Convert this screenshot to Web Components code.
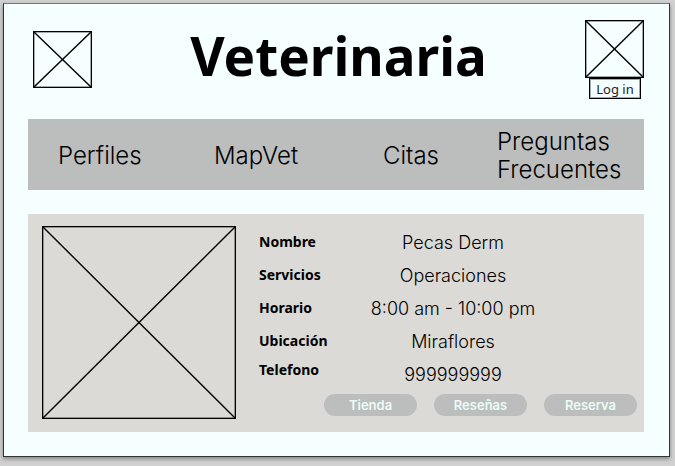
<!DOCTYPE html>
<html lang="es">
<head>
<meta charset="utf-8">
<title>Veterinaria</title>
<style>
  body { margin: 0; background: #d2d1d1; color: #000; font-family: Inter, "Noto Sans", sans-serif; }
</style>
</head>
<body>
<vet-page></vet-page>
<script>
const define = (name, html, setup) => customElements.define(name, class extends HTMLElement {
  connectedCallback() {
    if (this.shadowRoot) return;
    this.attachShadow({ mode: 'open' }).innerHTML = '<style>*{box-sizing:border-box}</style>' + html;
    if (setup) setup(this, this.shadowRoot);
  }
});

define('image-box', `
  <style>
    :host { display: block; }
    svg { display: block; width: 100%; height: 100%; border: 1px solid #000; box-shadow: inset 0 0 0 1px #0005; }
    line { stroke: #000; stroke-width: 1.4; }
  </style>
  <svg role="img" aria-label="Imagen"><line x1="0" y1="0" x2="100%" y2="100%"/><line x1="100%" y1="0" x2="0" y2="100%"/></svg>`);

define('vet-header', `
  <style>
    :host { display: block; }
    header { display: grid; grid-template-columns: 60px 1fr 60px; align-items: center; padding: 16px 0 20px 5px; }
    .logo { width: 59px; height: 57px; }
    h1 { margin: 0; padding-bottom: 8px; text-align: center; font: 700 53px/68px "Noto Sans", sans-serif; }
    .user { display: flex; flex-direction: column; align-items: flex-end; }
    .avatar { width: 59px; height: 58px; }
    button { width: 52px; height: 21px; margin-right: 3px; padding: 0; border: 1px solid #000; outline: 1px solid #0005; outline-offset: -2px;
      background: transparent; color: #222; font: 13px/18px "Noto Sans", sans-serif; }
  </style>
  <header>
    <image-box class="logo"></image-box>
    <h1>Veterinaria</h1>
    <div class="user"><image-box class="avatar"></image-box><button type="button">Log in</button></div>
  </header>`);

define('vet-nav', `
  <style>
    :host { display: block; }
    nav { display: grid; grid-template-columns: 156fr 169fr 114fr 128fr; align-items: center; min-height: 71px;
      padding: 9px 19px 6px 30px; background: #bcbebd; font-size: 24px; line-height: 28px; font-weight: 300; }
    ::slotted(a) { color: #000; text-decoration: none; }
  </style>
  <nav><slot></slot></nav>`);

define('detail-row', `
  <style>
    :host { display: grid; grid-template-columns: 78px 1fr; align-items: center; min-height: 33px; }
    .label { padding-bottom: 2px; font: 700 14px/20px "Noto Sans", sans-serif; }
    :host(:last-of-type) .label { padding-bottom: 10px; }
    .value { text-align: center; font-size: 18px; line-height: 24px; font-weight: 300; padding-right: 68px; }
  </style>
  <span class="label"></span><span class="value"><slot></slot></span>`,
  (host, root) => { root.querySelector('.label').textContent = host.getAttribute('label'); });

define('pill-button', `
  <style>
    :host { display: block; }
    button { width: 93px; height: 22px; padding: 0; border: 0; border-radius: 11px; background: #bcbebd;
      color: #ecfbf6; font: 600 13px/20px Inter, sans-serif; }
  </style>
  <button type="button"><slot></slot></button>`);

define('vet-card', `
  <style>
    :host { display: grid; grid-template-columns: 194px 1fr; gap: 23px; margin-top: 24px; padding: 12px 7px 13px 14px; background: #dbdad6; }
    .photo { width: 194px; height: 193px; }
    .actions { display: flex; justify-content: flex-end; gap: 17px; margin-top: 3px; }
  </style>
  <image-box class="photo"></image-box>
  <div><slot></slot><div class="actions"><slot name="action"></slot></div></div>`);

define('vet-page', `
  <style>
    :host { display: block; padding: 3px 5px 9px 3px; }
    main { min-height: calc(100vh - 12px); padding: 0 25px 24px 24px; border: 1px solid #333; border-top-color: #777;
      background: #f5ffff; box-shadow: 0 2px 4px #4a554a99; }
  </style>
  <main>
    <vet-header></vet-header>
    <vet-nav>
      <a href="#perfiles">Perfiles</a>
      <a href="#mapvet">MapVet</a>
      <a href="#citas">Citas</a>
      <a href="#preguntas">Preguntas Frecuentes</a>
    </vet-nav>
    <vet-card>
      <detail-row label="Nombre">Pecas Derm</detail-row>
      <detail-row label="Servicios">Operaciones</detail-row>
      <detail-row label="Horario">8:00 am - 10:00 pm</detail-row>
      <detail-row label="Ubicación">Miraflores</detail-row>
      <detail-row label="Telefono">999999999</detail-row>
      <pill-button slot="action">Tienda</pill-button>
      <pill-button slot="action">Reseñas</pill-button>
      <pill-button slot="action">Reserva</pill-button>
    </vet-card>
  </main>`);
</script>
</body>
</html>
